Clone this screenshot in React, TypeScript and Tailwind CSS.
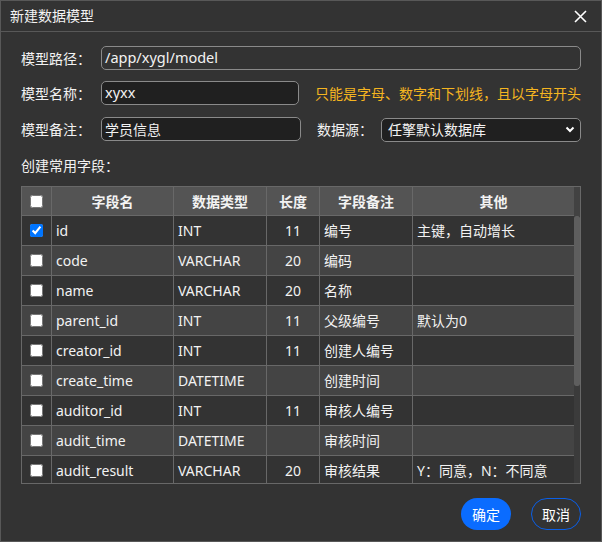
import React from "react";

type Field = { name: string; type: string; len: string; remark: string; other: string; checked?: boolean };

const FIELDS: Field[] = [
  { name: "id", type: "INT", len: "11", remark: "编号", other: "主键，自动增长", checked: true },
  { name: "code", type: "VARCHAR", len: "20", remark: "编码", other: "" },
  { name: "name", type: "VARCHAR", len: "20", remark: "名称", other: "" },
  { name: "parent_id", type: "INT", len: "11", remark: "父级编号", other: "默认为0" },
  { name: "creator_id", type: "INT", len: "11", remark: "创建人编号", other: "" },
  { name: "create_time", type: "DATETIME", len: "", remark: "创建时间", other: "" },
  { name: "auditor_id", type: "INT", len: "11", remark: "审核人编号", other: "" },
  { name: "audit_time", type: "DATETIME", len: "", remark: "审核时间", other: "" },
  { name: "audit_result", type: "VARCHAR", len: "20", remark: "审核结果", other: "Y：同意，N：不同意" },
];

const GRID = "grid grid-cols-[30px_122px_93px_53px_93px_161px]";

export default function App() {
  return (
    <div className="w-[602px] h-[542px] flex flex-col bg-[#333333] border border-[#585858] text-[#f2f2f2] text-[14px] font-['Noto_Sans','Noto_Sans_CJK_SC',sans-serif]">
      {/* title bar */}
      <div className="h-[31px] shrink-0 flex items-center justify-between pl-[9px] pr-[14px] border-b border-[#585858]">
        <span className="leading-none">新建数据模型</span>
        <svg width="13" height="13" viewBox="0 0 13 13" className="text-white">
          <path d="M1 1 L12 12 M12 1 L1 12" stroke="currentColor" strokeWidth="1.6" />
        </svg>
      </div>

      <div className="flex-1 flex flex-col px-[20px] pt-[14px]">
        {/* path */}
        <div className="flex items-center h-[24px]">
          <span className="w-[80px] shrink-0">模型路径：</span>
          <div className="flex-1 h-[24px] flex items-center px-[3px] rounded-[5px] border border-[#8a8a8a] bg-[#333333] text-[14.5px]">
            /app/xygl/model
          </div>
        </div>

        {/* name */}
        <div className="flex items-center h-[24px] mt-[11px]">
          <span className="w-[80px] shrink-0">模型名称：</span>
          <div className="w-[200px] h-[24px] flex items-center px-[3px] rounded-[5px] border border-[#8a8a8a] bg-[#202020] text-[14.5px]">
            xyxx
          </div>
          <span className="ml-[16px] whitespace-nowrap text-[#f5b520]">只能是字母、数字和下划线，且以字母开头</span>
        </div>

        {/* remark + datasource */}
        <div className="flex items-center h-[24px] mt-[12px]">
          <span className="w-[80px] shrink-0">模型备注：</span>
          <div className="w-[200px] h-[24px] flex items-center px-[3px] rounded-[5px] border border-[#8a8a8a] bg-[#202020]">
            学员信息
          </div>
          <span className="ml-[16px] w-[64px] shrink-0">数据源：</span>
          <div className="flex-1 h-[24px] mt-[1px] flex items-center justify-between pl-[6px] pr-[5px] rounded-[5px] border border-[#8a8a8a] bg-[#202020]">
            <span>任擎默认数据库</span>
            <svg width="10" height="7" viewBox="0 0 10 7">
              <path d="M1.5 1.5 L5 5 L8.5 1.5" fill="none" stroke="#ffffff" strokeWidth="2" />
            </svg>
          </div>
        </div>

        <div className="mt-[12px] h-[24px] flex items-center">创建常用字段：</div>

        {/* table */}
        <div className="mt-[9px] h-[298px] flex border border-[#686868] overflow-hidden">
          <div className="w-[552px] flex flex-col">
            <div className={`${GRID} h-[29px] shrink-0 bg-[#545454] font-bold border-b border-[#686868]`}>
              <div className="flex items-center justify-center border-r border-[#686868]">
                <input type="checkbox" readOnly className="m-0 w-[13px] h-[13px]" />
              </div>
              <div className="flex items-center justify-center border-r border-[#686868]">字段名</div>
              <div className="flex items-center justify-center border-r border-[#686868]">数据类型</div>
              <div className="flex items-center justify-center border-r border-[#686868]">长度</div>
              <div className="flex items-center justify-center border-r border-[#686868]">字段备注</div>
              <div className="flex items-center justify-center">其他</div>
            </div>
            {FIELDS.map((f, i) => (
              <div
                key={f.name}
                className={`${GRID} h-[30px] shrink-0 border-b border-[#686868] ${i % 2 === 0 ? "bg-[#333333]" : "bg-[#444444]"}`}
              >
                <div className="flex items-center justify-center border-r border-[#686868]">
                  <input type="checkbox" checked={!!f.checked} readOnly className="m-0 w-[13px] h-[13px]" />
                </div>
                <div className="flex items-center pl-[4px] border-r border-[#686868]">{f.name}</div>
                <div className="flex items-center pl-[4px] border-r border-[#686868]">{f.type}</div>
                <div className="flex items-center justify-center border-r border-[#686868]">{f.len}</div>
                <div className="flex items-center pl-[4px] border-r border-[#686868]">{f.remark}</div>
                <div className="flex items-center pl-[4px]">{f.other}</div>
              </div>
            ))}
          </div>
          {/* scrollbar */}
          <div className="w-[6px] flex flex-col">
            <div className="h-[29px] bg-[#424242]" />
            <div className="h-[170px] bg-[#5e5e5e] rounded-[2px]" />
            <div className="flex-1 bg-[#3b3b3b]" />
          </div>
        </div>

        {/* buttons */}
        <div className="mt-[14px] flex justify-end gap-[20px]">
          <button className="w-[50px] h-[32px] rounded-full bg-[#0a6cff] text-white">确定</button>
          <button className="w-[50px] h-[32px] rounded-full border border-[#0a5fe8] text-white">取消</button>
        </div>
      </div>
    </div>
  );
}
